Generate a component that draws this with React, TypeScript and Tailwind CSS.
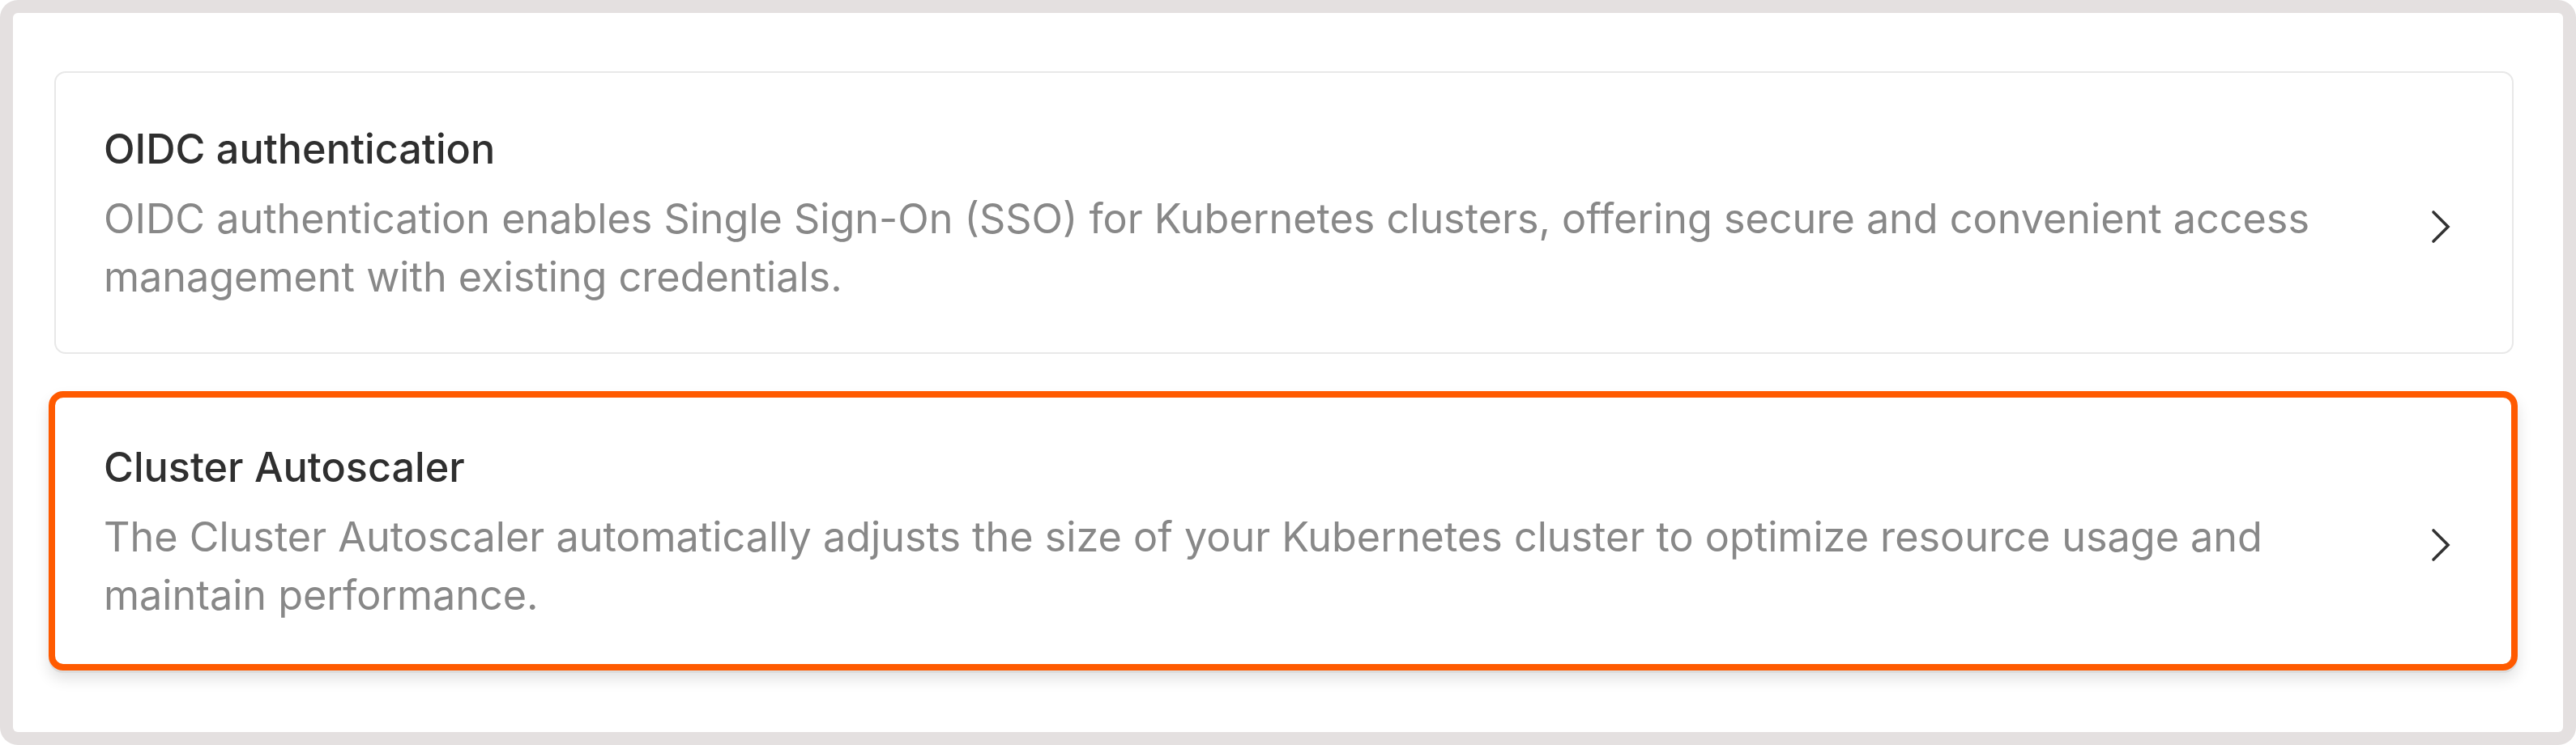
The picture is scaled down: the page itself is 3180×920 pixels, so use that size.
import React from "react";

function Chevron() {
  return (
    <svg width="24" height="42" viewBox="0 0 24 42" fill="none" className="shrink-0 mt-[34px]">
      <polyline points="3,3 21,21 3,39" stroke="#333333" strokeWidth="3.6" strokeLinecap="round" strokeLinejoin="miter" />
    </svg>
  );
}

export default function App() {
  return (
    <div className="w-[3180px] h-[920px] bg-white" style={{ fontFamily: "Inter, 'Noto Sans', sans-serif" }}>
      <div className="w-full h-full bg-[#e4e0e0] rounded-[22px] p-[16px]">
        <div className="w-full h-full bg-white rounded-[6px] pl-[44px] pr-[56px] pt-[72px] flex flex-col gap-[46px]">
          <div className="ml-[7px] mr-[5px] h-[349px] border-2 border-[#e8e8e8] rounded-[14px] pl-[59px] pr-[76px] flex items-center">
            <div className="flex-1 flex flex-col gap-[14px]">
              <div className="text-[50.3px] leading-[72px] font-medium text-[#2f2f2f]">OIDC authentication</div>
              <div className="text-[50.3px] leading-[72px] text-[#888888]">
                OIDC authentication enables Single Sign-On (SSO) for Kubernetes clusters, offering secure and convenient access
                <br />
                management with existing credentials.
              </div>
            </div>
            <Chevron />
          </div>
          <div className="h-[345px] border-[8px] border-[#ff5a00] rounded-[18px] pl-[60px] pr-[75px] flex items-center shadow-[0_3px_0_#dcdcdc,0_10px_18px_rgba(0,0,0,0.12)]">
            <div className="flex-1 flex flex-col gap-[14px]">
              <div className="text-[50.3px] leading-[72px] font-medium text-[#2f2f2f]">Cluster Autoscaler</div>
              <div className="text-[50.3px] leading-[72px] text-[#888888]">
                The Cluster Autoscaler automatically adjusts the size of your Kubernetes cluster to optimize resource usage and
                <br />
                maintain performance.
              </div>
            </div>
            <Chevron />
          </div>
        </div>
      </div>
    </div>
  );
}
